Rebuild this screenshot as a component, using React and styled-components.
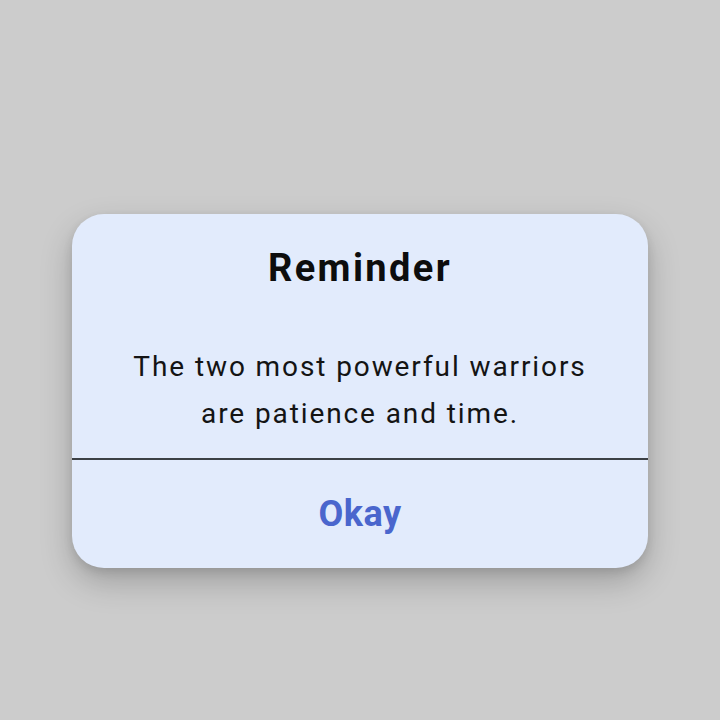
import React from 'react';
import styled, { createGlobalStyle } from 'styled-components';

const GlobalStyle = createGlobalStyle`
  html, body {
    margin: 0;
    padding: 0;
    background: #cccccc;
  }
  body {
    font-family: Roboto, "Noto Sans", sans-serif;
  }
`

const Page = styled.div`
  width: 720px;
  height: 720px;
  display: flex;
  justify-content: center;
  align-items: flex-start;
  padding-top: 214px;
  box-sizing: border-box;
`

const Dialog = styled.div`
  width: 576px;
  height: 354px;
  background: #e2ebfc;
  border-radius: 32px;
  box-shadow: 0 14px 32px rgba(0, 0, 0, 0.22), 0 4px 10px rgba(0, 0, 0, 0.1);
  display: flex;
  flex-direction: column;
  overflow: hidden;
`

const Title = styled.h2`
  margin: 0;
  padding-top: 33px;
  font-size: 38px;
  line-height: 42px;
  font-weight: 700;
  letter-spacing: 2.4px;
  color: #0d0d0d;
  text-align: center;
`

const Message = styled.p`
  margin: 54px 0 0;
  font-size: 28px;
  line-height: 47px;
  letter-spacing: 1.9px;
  color: #141414;
  text-align: center;
`

const Divider = styled.hr`
  margin: 21px 0 0;
  border: none;
  height: 2px;
  background: #3b4045;
`

const Action = styled.button`
  flex: 1;
  border: none;
  background: transparent;
  font-family: inherit;
  font-size: 36px;
  font-weight: 700;
  letter-spacing: 0.5px;
  color: #4a66cd;
  cursor: pointer;
`

const App = () => {
    return (
        <>
            <GlobalStyle />
            <Page>
                <Dialog>
                    <Title>Reminder</Title>
                    <Message>
                        The two most powerful warriors<br />
                        are patience and time.
                    </Message>
                    <Divider />
                    <Action>Okay</Action>
                </Dialog>
            </Page>
        </>
    )
}

export default App
